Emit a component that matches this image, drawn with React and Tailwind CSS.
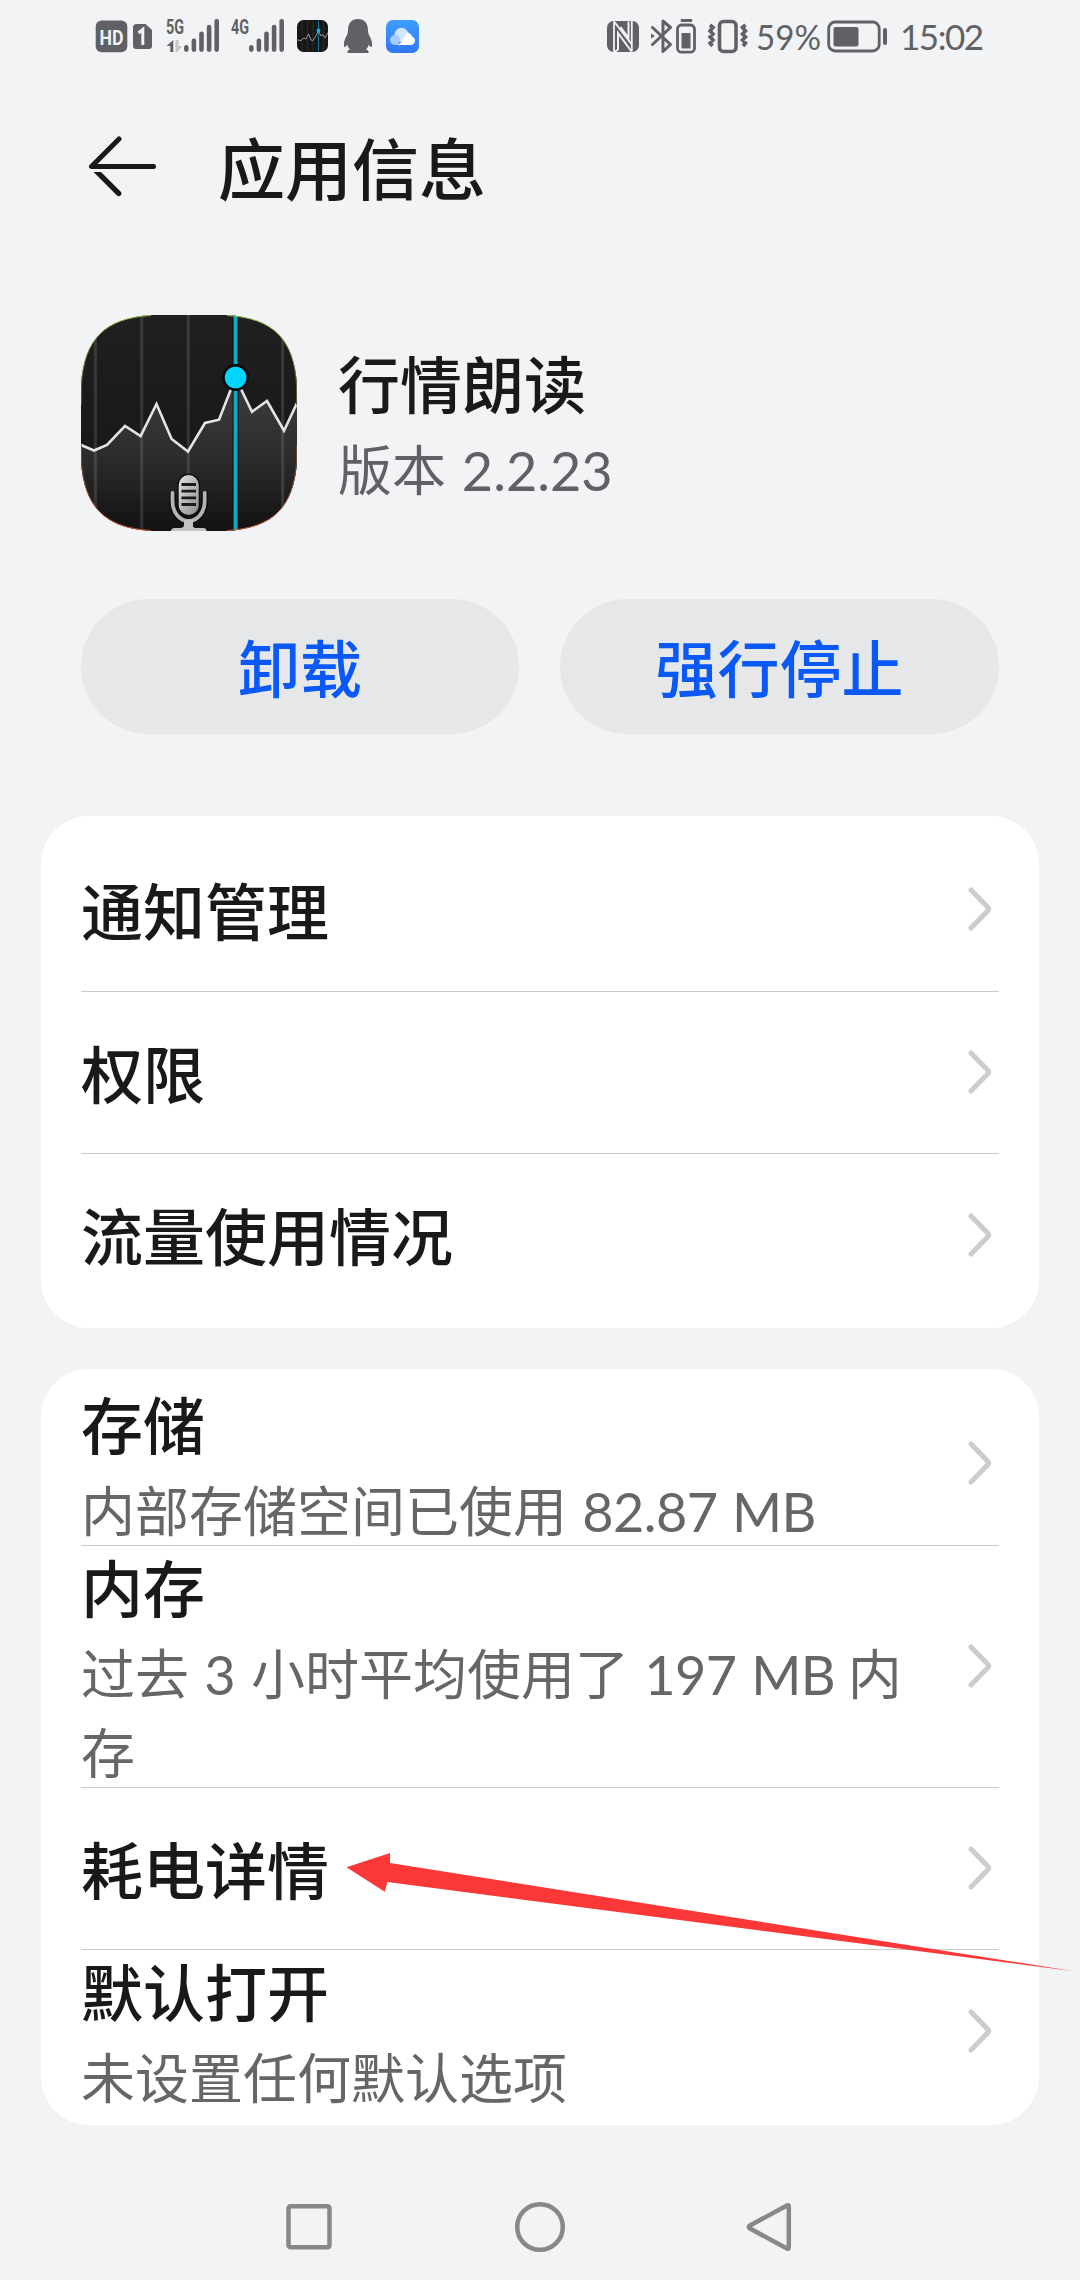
import React from "react";

const INK = "#5f6164";

function Bars() {
  return (
    <g stroke={INK} strokeWidth="4.6" strokeLinecap="round">
      <path d="M20.3 47.4V49.6M27.9 40.7V49.6M35.5 33.7V49.6M43.1 27V49.6M50.7 21.3V49.6" />
    </g>
  );
}

const LINE_LEFT =
  "M0 130L13 135.5L26 130L44 111L59.6 121L75.5 89L90.6 124L107 136.5L124 108L138 104.7L150 74";
const LINE_RIGHT = "M160 74L171 96.7L186 86L203 115.7L216 88";

function StockIcon({ className }) {
  return (
    <svg viewBox="0 0 216 216" className={className}>
      <defs>
        <linearGradient id="base" x1="0" y1="0" x2="0" y2="1">
          <stop offset="0" stopColor="#202020" />
          <stop offset="1" stopColor="#141414" />
        </linearGradient>
        <linearGradient id="area" x1="0" y1="74" x2="0" y2="216" gradientUnits="userSpaceOnUse">
          <stop offset="0" stopColor="#3c3c3c" />
          <stop offset="0.5" stopColor="#2b2b2b" />
          <stop offset="1" stopColor="#121212" />
        </linearGradient>
        <linearGradient id="mic" x1="0" y1="0" x2="1" y2="1">
          <stop offset="0" stopColor="#e2e2e2" />
          <stop offset="1" stopColor="#8c8c8c" />
        </linearGradient>
        <linearGradient id="rim" x1="0" y1="0" x2="0" y2="1">
          <stop offset="0" stopColor="#9ec24a" />
          <stop offset="0.5" stopColor="#3a4a30" />
          <stop offset="1" stopColor="#e0603c" />
        </linearGradient>
        <clipPath id="squircle">
          <path d="M70 0H146C192 3 213 24 216 70V146C213 192 192 213 146 216H70C24 213 3 192 0 146V70C3 24 24 3 70 0Z" />
        </clipPath>
      </defs>
      <g clipPath="url(#squircle)">
        <rect width="216" height="216" fill="url(#base)" />
        <path d={LINE_LEFT + "L155 62L160 74L171 96.7L186 86L203 115.7L216 88V216H0Z"} fill="url(#area)" />
        <path d="M14.4 0V216M60.7 0V216M107.3 0V216M201.6 0V216" stroke="#fff" strokeOpacity="0.12" strokeWidth="3" />
        <path d={LINE_LEFT} fill="none" stroke="#e4e4e4" strokeWidth="2.6" />
        <path d={LINE_RIGHT} fill="none" stroke="#e4e4e4" strokeWidth="2.6" />
        <path d="M154.6 0V216" stroke="#111" strokeWidth="6" />
        <path d="M154.6 0V216" stroke="#10a9c6" strokeWidth="4" />
        <circle cx="154.6" cy="62.5" r="13.5" fill="#080c0e" />
        <circle cx="154.6" cy="62.5" r="10.8" fill="#00d4ff" />
        <path d="M91.5 178V186C91.5 198 99 206 107.5 206S123.7 198 123.7 186V178" fill="none" stroke="#0d0d0d" strokeWidth="7" />
        <path d="M91.5 178V186C91.5 198 99 206 107.5 206S123.7 198 123.7 186V178" fill="none" stroke="#b4b4b4" strokeWidth="3.8" strokeLinecap="round" />
        <path d="M103 205H112V211Q112 213 116 213H122Q125.5 213 125.5 216H90Q90 213 94 213H99Q103 213 103 210Z" fill="#c4c4c4" />
        <rect x="96" y="158.5" width="23" height="43.5" rx="11.5" fill="#101010" />
        <rect x="97.7" y="160" width="20" height="40" rx="10" fill="url(#mic)" />
        <path d="M100.5 169.5H115M100.5 176.2H115M100.5 182.9H115M100.5 189.5H115" stroke="#1b1b1b" strokeWidth="2.8" />
      </g>
      <path
        d="M70 0.5C24 3 3 24 0.5 70V90M146 0.5C192 3 213 24 215.5 70V90M0.5 130V146C3 192 24 213 70 215.5M215.5 130V146C213 192 192 213 146 215.5"
        fill="none"
        stroke="url(#rim)"
        strokeWidth="0.9"
      />
    </svg>
  );
}

function SmallStockIcon() {
  return (
    <svg viewBox="0 0 31 32" className="ml-[10px] h-8 w-[31px]">
      <rect width="31" height="32" rx="6.5" fill="#171717" />
      <path d="M5 1V31M10.5 1V31M16 1V31M26.5 1V31" stroke="#2f3133" strokeWidth="0.8" />
      <path d="M21.5 0.5V31.5" stroke="#11708a" strokeWidth="1.2" />
      <path d="M0.5 20L4 20.5L7 18L9 19L11.5 14L14 20L16 20.5L18.5 16.5L21.5 11L24 16L26 14.5L28 18L31 12.5" fill="none" stroke="#9a9a9a" strokeWidth="1" />
      <circle cx="21.5" cy="10.5" r="1.9" fill="#12b5d8" />
    </svg>
  );
}

function StatusBar() {
  return (
    <div className="flex h-[75px] items-start pt-[10px] pr-[96px] pl-[95px]">
      <svg viewBox="0 10 33 50" className="h-[50px] w-[33px]">
        <rect x="0.7" y="20.5" width="31.6" height="31.8" rx="6" fill={INK} />
        <text x="16.5" y="44.5" textAnchor="middle" textLength="24" lengthAdjust="spacingAndGlyphs" fontSize="21" fontWeight="700" fontFamily="Roboto" fill="#f1f3f5">HD</text>
      </svg>
      <svg viewBox="0 10 19 50" className="ml-[5px] h-[50px] w-[19px]">
        <path d="M3.5 24H12.5L19 30V46Q19 49 16 49H3Q0 49 0 46V27.5Q0 24 3.5 24Z" fill={INK} />
        <path d="M5.5 33L9.8 29.5V45" fill="none" stroke="#f1f3f5" strokeWidth="3" />
      </svg>
      <svg viewBox="0 10 56 50" className="ml-[14px] h-[50px] w-14">
        <text x="0" y="34" textLength="18" lengthAdjust="spacingAndGlyphs" fontSize="20.5" fontWeight="700" fontFamily="Roboto" fill={INK}>5G</text>
        <path d="M7.3 40V52H4.3V46H0.5Z" fill={INK} />
        <path d="M9.5 40V52H11.5L16 46H12.5V40Z" fill="#c4c6c8" />
        <Bars />
      </svg>
      <svg viewBox="0 10 56 50" className="ml-[9px] h-[50px] w-14">
        <text x="0" y="34" textLength="18" lengthAdjust="spacingAndGlyphs" fontSize="20.5" fontWeight="700" fontFamily="Roboto" fill={INK}>4G</text>
        <Bars />
      </svg>
      <div className="flex pt-[10px]">
        <SmallStockIcon />
      </div>
      <svg viewBox="0 10 30 50" className="ml-[15px] h-[50px] w-[30px]">
        <path d="M15 19C21.5 19 25 23.5 25 30C25 32 25.3 33 26 35C28 38.5 29.5 42 29 46C28.7 48 27 47 25.8 44.5C25.3 46.5 24.3 48.2 23 49.5C25 50 26 51 25.5 53H4.5C4 51 5 50 7 49.5C5.7 48.2 4.7 46.5 4.2 44.5C3 47 1.3 48 1 46C0.5 42 2 38.5 4 35C4.7 33 5 32 5 30C5 23.5 8.5 19 15 19Z" fill={INK} />
      </svg>
      <svg viewBox="0 10 33 50" className="ml-[13px] h-[50px] w-[33px]">
        <defs>
          <linearGradient id="cloud" x1="0" y1="0" x2="0" y2="1">
            <stop offset="0" stopColor="#3f9dff" />
            <stop offset="1" stopColor="#2f78f3" />
          </linearGradient>
        </defs>
        <rect x="0" y="20" width="33" height="33" rx="7" fill="url(#cloud)" />
        <circle cx="15.5" cy="35" r="7.2" fill="#d3e6ff" />
        <circle cx="9" cy="40" r="5" fill="#a6cbff" />
        <path d="M9 45C13 44.5 15.5 43 17 40C18.5 36 20 34 22 32.5C25 34 26 35.5 26 36.5C28.5 37.5 29.3 39.5 29 41C28.5 43.5 27 45 24.5 45Z" fill="#fff" />
      </svg>

      <div className="flex-1" />

      <svg viewBox="0 10 32 50" className="h-[50px] w-8">
        <rect x="0" y="21" width="32" height="31" rx="6.5" fill={INK} />
        <path d="M7 21.5V52M24.8 21V51.5" stroke="#f1f3f5" strokeWidth="1.8" />
        <path d="M7 21.5L24.5 44M7.5 52L11 49.5V33L24.5 51.5M13.5 27L21.5 38V21.5" fill="none" stroke="#f1f3f5" strokeWidth="2" />
      </svg>
      <svg viewBox="0 10 22 50" className="ml-3 h-[50px] w-[22px]">
        <path d="M1.5 27.5L19.5 44.5L12 51.5V21L19.5 27.5L1.5 44.5" fill="none" stroke={INK} strokeWidth="3" strokeLinejoin="round" strokeLinecap="round" />
        <path d="M0 33.5L4 36L0 38.5Z" fill={INK} />
      </svg>
      <svg viewBox="0 10 20 50" className="ml-[3px] h-[50px] w-5">
        <path d="M6 20.5H15" stroke={INK} strokeWidth="2.8" strokeLinecap="round" />
        <rect x="1.5" y="25" width="17" height="27.2" rx="4" fill="none" stroke={INK} strokeWidth="2.8" />
        <rect x="5.5" y="33" width="9" height="15.5" fill={INK} />
      </svg>
      <svg viewBox="0 10 40 50" className="ml-3 h-[50px] w-10">
        <rect x="11.5" y="21.5" width="16.5" height="30" rx="4" fill="none" stroke={INK} strokeWidth="3.6" />
        <path d="M2 25L5 27.5L2 31L5 34L2 37L5 40L2 43L4.5 46M37.5 25L34.5 27.5L37.5 31L34.5 34L37.5 37L34.5 40L37.5 43L35 46" fill="none" stroke={INK} strokeWidth="3.6" />
      </svg>
      <svg viewBox="0 10 66 50" className="ml-2 h-[50px] w-[66px] overflow-visible">
        <text x="0" y="50" textLength="65" lengthAdjust="spacingAndGlyphs" fontSize="35" fontFamily="Lato" fill={INK}>59%</text>
      </svg>
      <svg viewBox="0 10 61 50" className="ml-[5px] h-[50px] w-[61px]">
        <rect x="1.7" y="22" width="50.5" height="29" rx="6.5" fill="none" stroke={INK} strokeWidth="2.8" />
        <rect x="6.5" y="27" width="25" height="19.5" rx="2" fill={INK} />
        <path d="M58 30V43" stroke={INK} strokeWidth="4" strokeLinecap="round" />
      </svg>
      <svg viewBox="0 10 84 50" className="ml-3 h-[50px] w-[84px]">
        <text x="0" y="50" textLength="84" lengthAdjust="spacing" fontSize="35" fontFamily="Lato" fill={INK}>15:02</text>
      </svg>
    </div>
  );
}

function Chevron() {
  return (
    <svg viewBox="0 0 24 44" className="mr-[7px] mb-px h-11 w-6 shrink-0">
      <path d="M3 3L20 20.5Q21.3 22 20 23.5L3 41" fill="none" stroke="#cccccc" strokeWidth="5" strokeLinecap="round" strokeLinejoin="round" />
    </svg>
  );
}

function Latin({ children }) {
  return <span className="tracking-[-0.6px]">{children}</span>;
}

function Row({ title, sub, height, padding = "pt-1", last }) {
  return (
    <>
      <div className={"flex items-center justify-between " + height}>
        <div className={padding}>
          <div className="text-[62px] leading-[82px] font-medium text-[#191919]">{title}</div>
          {sub && (
            <div className="mt-[5px] w-[840px] text-[54px] leading-[79px] text-[#666666] [word-spacing:1.5px]">{sub}</div>
          )}
        </div>
        <Chevron />
      </div>
      {!last && <div className="h-px bg-[#c9c9c9]" />}
    </>
  );
}

export default function App() {
  return (
    <div className="relative flex h-[2280px] w-[1080px] flex-col overflow-hidden bg-[#f1f3f5] font-['Lato','Noto_Sans_CJK_SC',sans-serif]">
      <StatusBar />

      <div className="flex h-[184px] items-center pl-[88px]">
        <svg viewBox="0 0 70 66" className="h-[66px] w-[70px]">
          <path d="M31 5L3.5 32.5H65.5" fill="none" stroke="#191919" strokeWidth="5" strokeLinecap="round" strokeLinejoin="round" />
          <path d="M5.5 38H13L32.5 57.5A2.4 2.4 0 0 1 29 61.5Z" fill="#191919" />
        </svg>
        <h1 className="ml-[60px] pt-[3px] text-[67px] leading-[80px] font-medium text-[#191919]">应用信息</h1>
      </div>

      <div className="mt-14 flex h-[216px] items-center pl-[81px]">
        <StockIcon className="h-[216px] w-[216px]" />
        <div className="ml-[41px] pt-[9px]">
          <div className="text-[62px] leading-[84px] font-medium text-[#191919]">行情朗读</div>
          <div className="mt-[2px] text-[54px] leading-[84px] text-[#5f6164] [word-spacing:2px]">版本 2.2.23</div>
        </div>
      </div>

      <div className="mt-[68px] grid grid-cols-[438px_439px] gap-[41px] px-[81px] text-[62px] font-medium text-[#0a59f7]">
        <button className="h-[135px] rounded-full bg-[#e5e7e9] pt-[5px]">卸载</button>
        <button className="h-[135px] rounded-full bg-[#e5e7e9] pt-[5px]">强行停止</button>
      </div>

      <div className="mx-[41px] mt-[82px] rounded-[48px] bg-white px-10 py-3">
        <Row title="通知管理" height="h-[163px]" />
        <Row title="权限" height="h-[161px]" />
        <Row title="流量使用情况" height="h-[162px]" last />
      </div>

      <div className="mx-[41px] mt-[41px] rounded-[48px] bg-white px-10 py-3">
        <Row
          title="存储"
          sub={<>内部存储空间已使用 <Latin>82.87 MB</Latin></>}
          height="h-[164px]"
          padding="pt-[9px]"
        />
        <Row
          title="内存"
          sub={<>过去 3 小时平均使用了 <Latin>197 MB</Latin><span className="[word-spacing:-1px]"> 内存</span></>}
          height="h-[241px]"
          padding="pt-[7px]"
        />
        <Row title="耗电详情" height="h-[161px]" />
        <Row title="默认打开" sub="未设置任何默认选项" height="h-[163px]" padding="pt-[7px]" last />
      </div>

      <div className="flex flex-1 items-start pt-[75px] pl-[284px]">
        <svg viewBox="0 0 50 54" className="h-[54px] w-[50px]">
          <rect x="4.5" y="6.2" width="41" height="41" rx="2" fill="none" stroke="#888888" strokeWidth="4.5" />
        </svg>
        <svg viewBox="0 0 54 54" className="ml-[179px] h-[54px] w-[54px]">
          <circle cx="27" cy="27" r="22.8" fill="none" stroke="#888888" strokeWidth="4.5" />
        </svg>
        <svg viewBox="0 0 48 54" className="ml-[178px] h-[54px] w-12">
          <path d="M42 5.5Q43.8 4.5 43.8 6.5V47.5Q43.8 49.5 42 48.5L5 28.5Q2.5 27 5 25.5Z" fill="none" stroke="#888888" strokeWidth="4.5" strokeLinejoin="round" />
        </svg>
      </div>

      <svg viewBox="346 1853 728 120" className="absolute top-[1853px] left-[346px] h-[120px] w-[728px]">
        <path d="M346.5 1867.3L390 1853V1863L1074 1971.3L387.4 1882L384.7 1891.7Z" fill="#fb3838" />
      </svg>
    </div>
  );
}
